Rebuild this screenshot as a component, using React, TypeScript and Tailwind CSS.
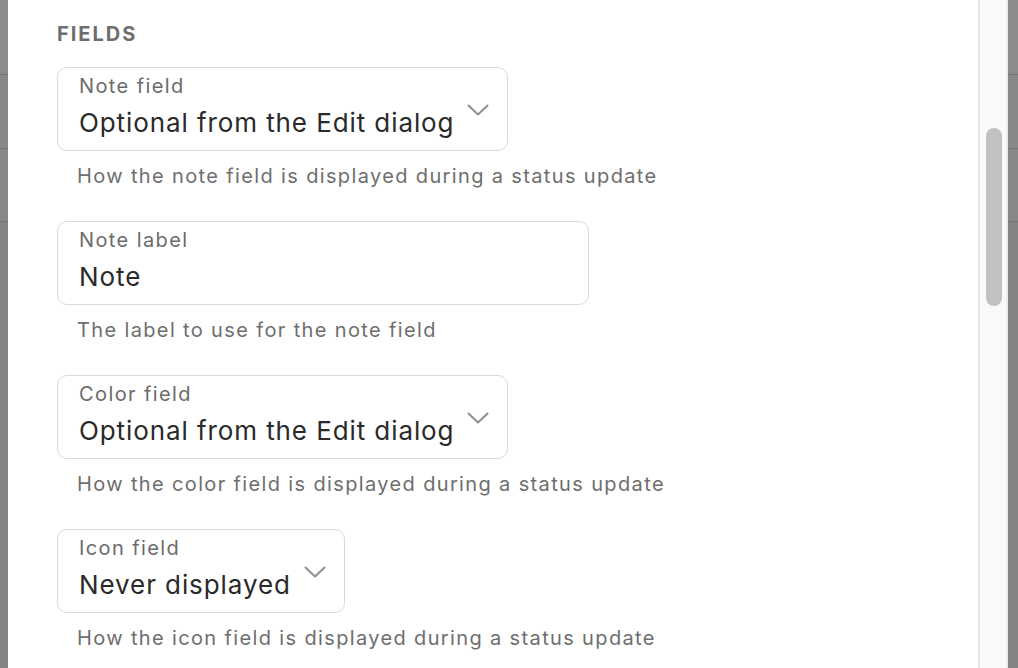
import React from "react";

type FieldProps = {
  label: string;
  value: string;
  help: string;
  select?: boolean;
  width?: string;
};

const Chevron = () => (
  <svg width="22" height="13" viewBox="0 0 22 13" fill="none" className="mt-[31px] shrink-0">
    <polyline
      points="1.5,1.5 11,10.5 20.5,1.5"
      stroke="#8e8e93"
      strokeWidth="2"
      strokeLinecap="round"
      strokeLinejoin="round"
    />
  </svg>
);

const Field = ({ label, value, help, select, width }: FieldProps) => {
  return (
    <div className="flex flex-col items-start">
      <div
        className={`flex items-start rounded-[10px] border-[1.5px] border-[#d9d9d9] bg-white pl-[21px] pt-[5px] h-[84px] ${
          select ? "pr-[18px] gap-[13px]" : "pr-[20px]"
        } ${width ?? ""}`}
      >
        <div className="flex flex-col">
          <span className="text-[20px] leading-[26px] tracking-[0.07em] text-[#6b6b6b]">{label}</span>
          <span className="mt-[5px] text-[26px] leading-[38px] tracking-[0.035em] text-[#2a2a2a]">
            {value}
          </span>
        </div>
        {select && <Chevron />}
      </div>
      <p className="mt-[11px] pl-[20px] text-[20px] leading-[28px] tracking-[0.068em] text-[#6e6e6e]">
        {help}
      </p>
    </div>
  );
};

const Strip = () => (
  <div className="flex flex-col h-full bg-[#858585]">
    <div className="h-[75px] bg-[#8b8b8b] border-b border-[#747474]" />
    <div className="h-[74px] bg-[#888888] border-b border-[#747474]" />
    <div className="h-[73px] bg-[#878787] border-b border-[#747474]" />
    <div className="flex-1 bg-[#838383]" />
  </div>
);

const App = () => {
  return (
    <div
      className="flex h-[668px] w-[1018px] overflow-hidden bg-white"
      style={{ fontFamily: "Inter, 'Noto Sans', sans-serif" }}
    >
      <div className="w-[8px] shrink-0">
        <Strip />
      </div>
      <div className="flex-1 border-r-2 border-[#e8e8e8] pl-[49px] pt-[20px]">
        <h2 className="text-[20px] leading-[28px] font-bold tracking-[0.1em] text-[#6e6e6e] mb-[19px]">
          FIELDS
        </h2>
        <div className="flex flex-col gap-[31px]">
          <Field
            label="Note field"
            value="Optional from the Edit dialog"
            help="How the note field is displayed during a status update"
            select
          />
          <Field
            label="Note label"
            value="Note"
            help="The label to use for the note field"
            width="w-[532px]"
          />
          <Field
            label="Color field"
            value="Optional from the Edit dialog"
            help="How the color field is displayed during a status update"
            select
          />
          <Field
            label="Icon field"
            value="Never displayed"
            help="How the icon field is displayed during a status update"
            select
          />
        </div>
      </div>
      <div className="w-[28px] shrink-0 bg-[#fafafa] border-r-2 border-[#ececec] pl-[6px] pt-[128px]">
        <div className="w-[16px] h-[178px] rounded-full bg-[#c1c1c1]" />
      </div>
      <div className="w-[10px] shrink-0">
        <Strip />
      </div>
    </div>
  );
};

export default App;
